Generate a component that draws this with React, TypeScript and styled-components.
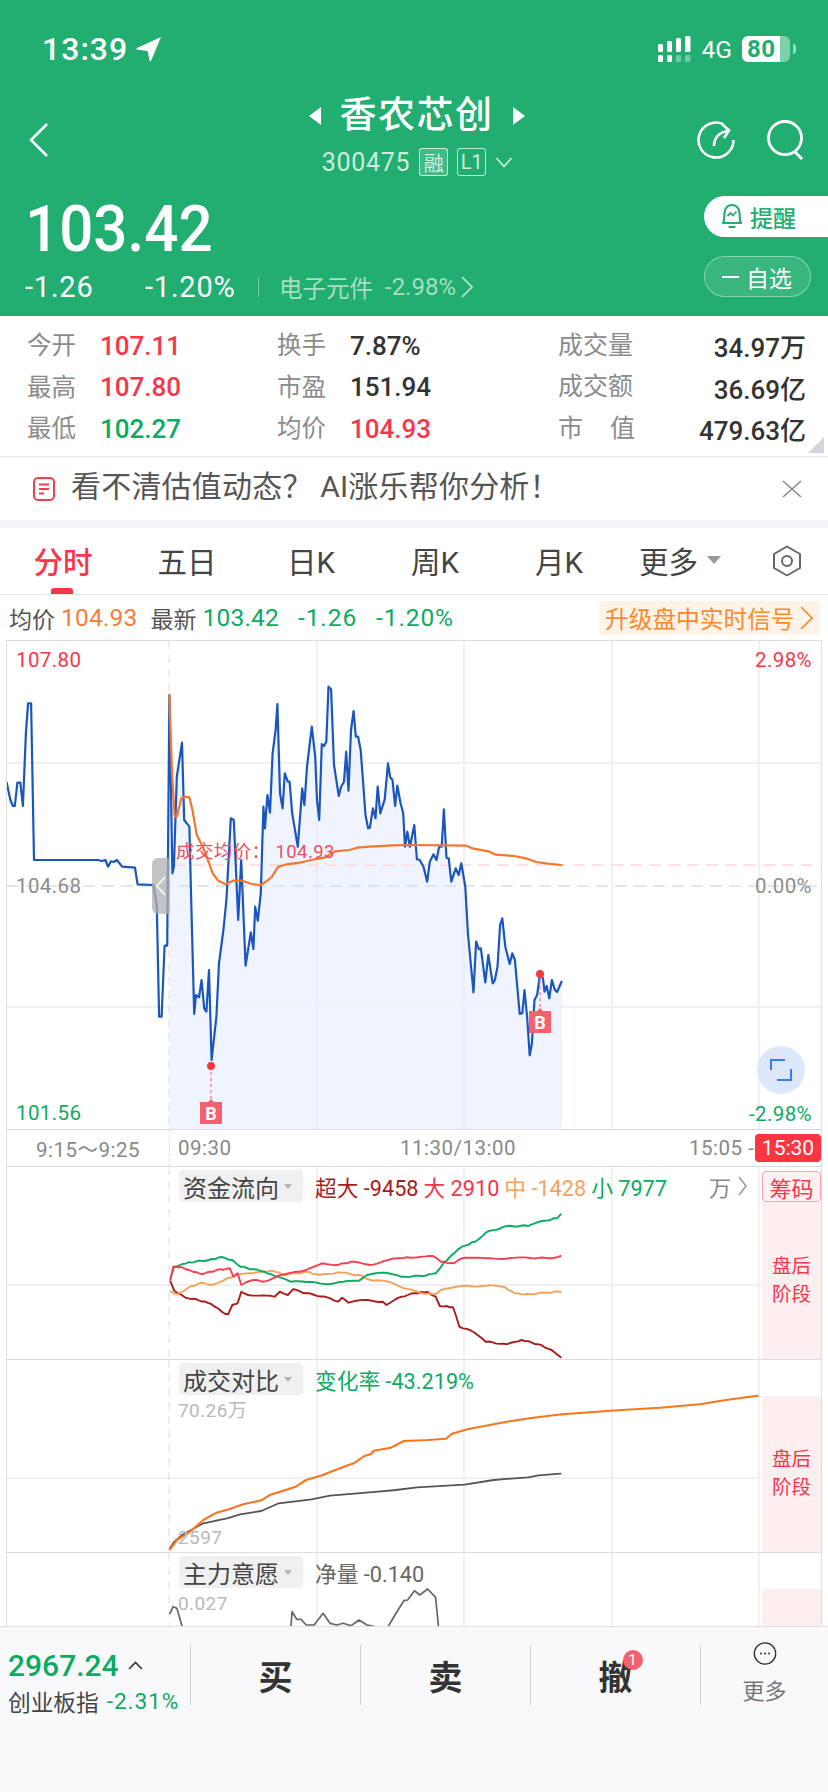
import React from 'react';
import styled, { createGlobalStyle } from 'styled-components';

const GREEN = '#22ae70';
const RED = '#f9354a';
const UP = '#0bab62';
const FONT = `Roboto, "Noto Sans CJK SC", sans-serif`;

const Global = createGlobalStyle`
  html, body { margin: 0; padding: 0; background: #fff; }
  body { width: 828px; height: 1792px; overflow: hidden; font-family: ${FONT}; }
  * { box-sizing: border-box; }
`;

type P = number[];
const toPts = (a: P[], sx: number, sy: number, ox: number, oy: number) =>
  a.map(([x, y]) => `${(x / sx - ox).toFixed(1)},${(y / sy - oy).toFixed(1)}`).join(' ');

/* adds the small tick-by-tick steps of a money-flow line to a traced outline */
const rough = (a: P[], amp: number): P[] => {
  const out: P[] = [];
  for (let i = 0; i < a.length - 1; i++) {
    const [x0, y0] = a[i];
    const [x1, y1] = a[i + 1];
    const n = Math.max(1, Math.round((x1 - x0) / 7));
    for (let k = 0; k < n; k++) {
      const t = k / n;
      const x = x0 + (x1 - x0) * t;
      out.push([x, y0 + (y1 - y0) * t + (k === 0 ? 0 : Math.sin(x * 1.7) * amp)]);
    }
  }
  out.push(a[a.length - 1]);
  return out;
};

const MX = 2.7034;
const blue: P[] = [[18,428],[28,480],[35,498],[40,498],[47,428],[55,428],[62,498],[70,280],[76,190],[84,190],[92,660],[265,660],[275,663],[285,660],[292,680],[300,664],[308,666],[316,660],[330,680],[365,683],[372,733],[415,735],[424,800],[430,1130],[437,1130],[445,917],[452,917],[458,165],[466,700],[470,680],[478,410],[492,308],[498,540],[512,560],[517,780],[525,1122],[530,1065],[538,1072],[545,1020],[552,1105],[558,1115],[565,990],[572,1260],[585,1130],[592,970],[604,870],[612,780],[624,535],[632,540],[644,840],[652,660],[664,977],[678,877],[685,927],[690,800],[697,842],[705,760],[712,500],[716,565],[723,465],[730,518],[737,340],[745,270],[750,192],[757,460],[764,505],[770,400],[778,425],[783,425],[790,520],[805,620],[817,445],[823,495],[830,380],[843,260],[852,350],[857,480],[863,540],[870,312],[876,318],[882,305],[888,140],[895,148],[903,375],[916,468],[922,440],[930,425],[936,335],[942,452],[949,270],[956,213],[962,290],[968,290],[975,330],[988,525],[995,565],[1000,563],[1008,505],[1015,535],[1021,440],[1028,520],[1040,478],[1049,370],[1055,412],[1061,420],[1068,498],[1074,437],[1083,490],[1090,520],[1095,620],[1101,575],[1108,620],[1120,555],[1127,658],[1135,660],[1145,680],[1155,725],[1162,665],[1172,643],[1180,660],[1187,620],[1194,620],[1200,508],[1207,654],[1213,655],[1220,725],[1232,685],[1240,705],[1247,670],[1258,740],[1265,880],[1280,1057],[1287,905],[1295,928],[1300,925],[1312,1027],[1320,945],[1332,1030],[1338,1020],[1345,980],[1352,855],[1358,835],[1366,920],[1378,972],[1385,940],[1392,960],[1405,1122],[1412,1120],[1418,1050],[1425,1130],[1432,1246],[1438,1210],[1445,1080],[1452,1065],[1460,1002],[1468,1015],[1472,1055],[1478,1038],[1485,1075],[1492,1020],[1500,1050],[1506,1056],[1518,1025]];
const blueFill: P[] = [[458,1467],...blue.slice(27),[1520,1025],[1520,1467]];
const avg: P[] = [[458,165],[465,400],[472,528],[478,530],[490,475],[500,470],[512,472],[520,510],[532,585],[550,625],[562,660],[575,700],[590,722],[610,733],[630,722],[655,722],[680,732],[705,735],[725,720],[735,710],[752,680],[775,673],[810,668],[850,658],[880,652],[905,634],[945,630],[965,623],[1000,620],[1060,616],[1120,615],[1200,616],[1260,617],[1280,626],[1320,634],[1340,644],[1390,648],[1425,656],[1450,666],[1480,671],[1518,675]];

const flowGreen: P[] = [[323,355],[330,320],[345,312],[370,305],[395,300],[420,291],[440,300],[455,320],[480,328],[500,335],[520,348],[550,365],[580,366],[615,372],[650,365],[680,362],[695,345],[730,338],[760,350],[800,348],[825,340],[840,310],[860,280],[875,260],[900,245],[920,218],[960,198],[1000,198],[1030,182],[1055,175],[1062,163]];
const flowRed: P[] = [[323,360],[328,320],[345,322],[365,335],[385,342],[410,330],[435,325],[442,350],[450,340],[457,375],[480,360],[500,365],[530,345],[560,335],[580,330],[610,310],[640,315],[665,305],[700,315],[735,300],[770,292],[820,288],[835,305],[860,310],[875,295],[920,295],[950,297],[1000,293],[1040,295],[1062,288]];
const flowOrange: P[] = [[323,395],[335,403],[355,385],[380,368],[400,375],[430,355],[450,345],[480,340],[515,332],[540,345],[580,335],[605,345],[640,337],[680,345],[705,362],[735,365],[765,385],[800,400],[825,403],[835,390],[850,385],[865,380],[920,377],[955,380],[975,400],[990,404],[1030,398],[1062,395]];
const flowDark: P[] = [[323,365],[330,392],[350,412],[375,420],[400,432],[420,455],[432,463],[440,435],[450,430],[457,395],[470,405],[520,410],[530,395],[545,405],[555,388],[580,400],[620,412],[640,425],[648,413],[660,428],[690,420],[725,425],[732,435],[760,410],[785,400],[810,396],[825,410],[833,438],[858,442],[870,500],[890,510],[920,545],[960,553],[988,540],[1020,553],[1045,570],[1062,592]];
const volOrange: P[] = [[322,568],[335,540],[360,515],[385,480],[410,458],[435,447],[460,433],[495,421],[512,404],[535,393],[560,380],[580,360],[610,346],[640,327],[670,310],[690,288],[702,283],[708,272],[740,263],[765,243],[810,240],[845,236],[855,222],[885,208],[960,185],[1010,173],[1065,163],[1170,151],[1250,143],[1325,133],[1375,120],[1435,107]];
const volGrey: P[] = [[322,565],[330,545],[345,525],[385,490],[430,475],[455,463],[495,453],[528,430],[590,418],[625,407],[700,397],[750,390],[790,382],[880,374],[935,360],[1000,352],[1020,346],[1062,341]];
const will1: P[] = [[322,160],[328,140],[335,145],[345,200],[350,225]];
const will2: P[] = [[550,225],[553,155],[562,178],[570,178],[580,195],[595,195],[612,160],[625,190],[638,195],[650,190],[665,197],[680,180],[695,195],[705,198],[720,205],[735,200],[750,160],[765,122],[772,120],[785,92],[795,105],[810,87],[825,112],[832,225]];

/* ---------- header ---------- */
const Page = styled.div`
  width: 828px; height: 1792px; position: relative; overflow: hidden; background: #fff; font-family: ${FONT};
`;
const Header = styled.header`
  height: 316px; background: ${GREEN}; color: #fff; display: flex; flex-direction: column;
`;
const StatusBar = styled.div`
  height: 98px; display: flex; align-items: center; padding: 0 32px 0 42px;
`;
const Clock = styled.span`
  font-size: 32px; font-weight: 500; letter-spacing: 1px; margin-right: 8px;
`;
const StatusRight = styled.div`
  margin-left: auto; display: flex; align-items: center;
`;
const Net = styled.span`
  font-size: 24.5px; margin: 0 10px 0 11px; font-weight: 400;
`;
const Battery = styled.div`
  width: 48px; height: 26px; border-radius: 6px; display: flex; align-items: center; overflow: hidden;
  background: linear-gradient(to right, #fff 0 38px, rgba(255,255,255,.42) 38px);
  color: ${GREEN}; font-size: 24px; font-weight: 700; padding-left: 5px; letter-spacing: .5px;
`;
const BatteryCap = styled.div`
  width: 3px; height: 10px; margin-left: 3px; border-radius: 0 3px 3px 0; background: rgba(255,255,255,.5);
`;
const NavRow = styled.div`
  height: 88px; display: grid; grid-template-columns: 1fr auto 1fr; padding: 0 24px 0 29px;
`;
const NavSide = styled.div<{ $end?: boolean }>`
  display: flex; align-items: center; gap: 30px; justify-content: ${p => (p.$end ? 'flex-end' : 'flex-start')}; padding-bottom: 5px;
`;
const NavCenter = styled.div`
  display: flex; flex-direction: column; align-items: center; gap: 14px;
`;
const TitleRow = styled.div`
  display: flex; align-items: center; gap: 19px; height: 36px;
`;
const Title = styled.h1`
  margin: 0; font-size: 37px; line-height: 36px; font-weight: 500; letter-spacing: 1.5px;
`;
const Tri = styled.i<{ $dir: 'l' | 'r' }>`
  width: 0; height: 0; border-top: 9px solid transparent; border-bottom: 9px solid transparent;
  ${p => (p.$dir === 'l' ? 'border-right: 12px solid #fff;' : 'border-left: 12px solid #fff;')}
`;
const CodeRow = styled.div`
  display: flex; align-items: center; height: 28px; color: rgba(255,255,255,.78); margin-left: 2px;
`;
const Code = styled.span`
  font-size: 25px; letter-spacing: .7px; margin-right: 9px;
`;
const Tag = styled.span<{ $fill?: boolean }>`
  width: 29px; height: 28px; border: 1px solid rgba(255,255,255,.75); border-radius: 3px; font-size: 20px;
  display: flex; align-items: center; justify-content: center; margin-right: 9px;
  background: ${p => (p.$fill ? 'rgba(255,255,255,.15)' : 'transparent')};
`;
const PriceRow = styled.div`
  flex: 1; display: flex; justify-content: space-between; padding-left: 25px;
`;
const PriceCol = styled.div`
  padding-top: 11px; display: flex; flex-direction: column; gap: 11px;
`;
const BigPrice = styled.div`
  font-size: 65px; line-height: 64px; font-weight: 500; transform: scaleX(.925); transform-origin: left center;
`;
const SubRow = styled.div`
  display: flex; align-items: center; height: 30px;
`;
const Change = styled.span<{ $w: number }>`
  width: ${p => p.$w}px; font-size: 29px; letter-spacing: .8px;
`;
const SubDivider = styled.i`
  width: 1px; height: 20px; background: rgba(255,255,255,.4); margin: 0 20px 0 21px;
`;
const Sector = styled.span`
  font-size: 24px; color: rgba(255,255,255,.6); display: flex; align-items: center; gap: 5px;
`;
const SectorName = styled.span`
  font-size: 23.5px; margin-right: 7px;
`;
const PillCol = styled.div`
  padding-top: 10px; width: 124px; display: flex; flex-direction: column; gap: 19px;
`;
const RemindPill = styled.div`
  height: 41px; background: #fff; border-radius: 21px 0 0 21px; color: ${GREEN}; font-size: 23px; font-weight: 500;
  display: flex; align-items: center; padding-left: 16px; gap: 6px;
`;
const WatchPill = styled.div`
  height: 41px; width: 107px; background: rgba(255,255,255,.1); border: 1px solid rgba(255,255,255,.4); border-radius: 21px;
  display: flex; align-items: center; padding-left: 17px; font-size: 23px; gap: 7px;
`;
const Dash = styled.i`
  width: 17px; height: 2px; background: #fff;
`;

/* ---------- stats ---------- */
const Stats = styled.section`
  height: 141px; position: relative; padding: 8px 22px 0 27px; border-bottom: 1px solid #e8e8e8;
  display: grid; grid-template-columns: 250px 281px 1fr; grid-auto-rows: 41.5px; align-items: center;
`;
const Stat = styled.div`
  display: flex; align-items: center;
`;
const StatLabel = styled.span`
  width: 73px; font-size: 24.5px; color: #8b8b8b; position: relative; top: -1px;
`;
const StatValue = styled.span<{ $c?: string }>`
  font-size: 26px; color: ${p => p.$c || '#333'}; font-weight: 500; position: relative; top: 1px;
`;
const StatWide = styled(Stat)`
  justify-content: space-between;
`;
const SpacedLabel = styled.span`
  width: 77px; font-size: 25px; color: #8b8b8b; display: flex; justify-content: space-between; position: relative; top: -2px;
`;
const Corner = styled.i`
  position: absolute; right: 4px; bottom: 3px; width: 0; height: 0;
  border-left: 16px solid transparent; border-bottom: 16px solid #d2d5da;
`;

const Banner = styled.div`
  height: 63px; display: flex; align-items: center; padding: 0 26px 0 33px; gap: 16px;
`;
const BannerText = styled.span`
  font-size: 30px; line-height: 36px; color: #555; flex: 1; white-space: pre; margin-top: -4px; letter-spacing: .2px;
`;
const Band = styled.div`
  height: 8px; background: #f2f4f8;
`;

/* ---------- tabs ---------- */
const Tabs = styled.nav`
  height: 67px; display: grid; grid-template-columns: repeat(6, 124px) 83px; padding-left: 1px; border-bottom: 1px solid #e4e4e4;
  align-items: center;
`;
const Tab = styled.div<{ $on?: boolean; $shift?: number }>`
  height: 100%; position: relative; display: flex; align-items: center; justify-content: center; gap: 9px;
  font-size: 29.5px; color: ${p => (p.$on ? RED : '#444')}; font-weight: ${p => (p.$on ? 500 : 400)};
  padding-right: ${p => p.$shift ?? 0}px; padding-bottom: 2px;
  ${p => p.$on && `&::after { content: ''; position: absolute; left: 50px; bottom: 0; width: 22px; height: 6px; border-radius: 3px 3px 0 0; background: ${RED}; }`}
`;
const Caret = styled.i<{ $s?: number; $c?: string }>`
  width: 0; height: 0; border-left: ${p => p.$s ?? 7}px solid transparent; border-right: ${p => p.$s ?? 7}px solid transparent;
  border-top: ${p => (p.$s ?? 7) * 1.15}px solid ${p => p.$c || '#999'};
`;
const IconCell = styled.div`
  display: flex; align-items: center; justify-content: center;
`;

/* ---------- info row ---------- */
const InfoRow = styled.div`
  height: 45px; display: flex; align-items: center; padding: 0 8px 0 9px; font-size: 23px;
`;
const InfoLabel = styled.span`
  color: #555; margin-right: 6px;
`;
const InfoNum = styled.span<{ $c: string; $mr: number }>`
  color: ${p => p.$c}; margin-right: ${p => p.$mr}px; font-size: 24.5px; letter-spacing: .2px;
`;
const InfoDelta = styled(InfoNum)`
  letter-spacing: .9px;
`;
const Signal = styled.div`
  margin-left: auto; width: 221px; height: 34px; background: #fef3e9; border-radius: 4px; color: #fb8a2e; font-size: 23.7px;
  display: flex; align-items: center; padding-left: 6px; gap: 5px;
`;

/* ---------- charts ---------- */
const Charts = styled.section`
  margin: 0 6px; height: 986px; border: 1px solid #ddd; border-bottom: 0; overflow: hidden;
`;
const Canvas = styled.div`
  position: relative;
`;
const Drawing = styled.svg`
  display: block;
`;
const Label = styled.span<{ $x?: number; $r?: number; $y: number; $c: string; $s?: number }>`
  position: absolute; top: ${p => p.$y}px; transform: translateY(-50%); white-space: nowrap;
  ${p => (p.$r !== undefined ? `right: ${p.$r}px;` : `left: ${p.$x}px;`)}
  color: ${p => p.$c}; font-size: ${p => p.$s ?? 20.5}px; letter-spacing: .4px;
`;
const Handle = styled.div`
  position: absolute; left: 145px; top: 217px; width: 18px; height: 56px; background: rgba(176,176,176,.75);
  border-radius: 6px 0 0 6px; display: flex; align-items: center; justify-content: center;
`;
const Expand = styled.div`
  position: absolute; left: 750px; top: 405px; width: 48px; height: 48px; border-radius: 50%; background: #dce7fb;
  display: flex; align-items: center; justify-content: center;
`;
const TimeAxis = styled.div`
  position: relative; height: 37px; border-top: 1px solid #ddd;
`;
const AxisDash = styled.i`
  position: absolute; left: 162px; top: 0; bottom: 0; border-left: 1px dashed #ddd;
`;
const TimeText = styled.span<{ $x: number }>`
  position: absolute; left: ${p => p.$x}px; top: 50%; transform: translateY(-50%); font-size: 20.5px; color: #888; letter-spacing: .5px; white-space: nowrap;
`;
const EndTime = styled.span`
  position: absolute; left: 748px; right: 0; top: 4px; height: 28px; border-radius: 4px; background: #fb3640; color: #fff;
  font-size: 21px; display: flex; align-items: center; justify-content: center;
`;
const PanelBox = styled(Canvas)`
  border-top: 1px solid #ddd;
`;
const Selector = styled.div`
  position: absolute; left: 172px; top: 3px; width: 124px; height: 32px; background: #f0f0f0; border-radius: 4px;
  display: flex; align-items: center; padding-left: 4px; gap: 5px; font-size: 24px; color: #444;
`;
const Legend = styled.div`
  position: absolute; left: 308px; top: 3px; height: 32px; display: flex; align-items: center; gap: 5px; font-size: 21.7px; white-space: nowrap;
`;
const LegendItem = styled.span<{ $c: string }>`
  color: ${p => p.$c};
`;
const Unit = styled.span`
  position: absolute; left: 702px; top: 3px; height: 32px; display: flex; align-items: center; gap: 7px; font-size: 22px; color: #888;
`;
const ChipBtn = styled.span`
  position: absolute; left: 755px; top: 4px; width: 59px; height: 31px; border: 1px solid #f6a5ab; border-radius: 4px; background: #fff1f1;
  color: ${RED}; font-size: 22px; display: flex; align-items: center; justify-content: center;
`;
const Phase = styled.div<{ $top: number }>`
  position: absolute; left: 755px; right: 0; top: ${p => p.$top}px; bottom: 0; background: #fdefef; color: ${RED};
  font-size: 19.5px; line-height: 28px; display: flex; align-items: center; justify-content: center; text-align: center;
`;

/* ---------- bottom bar ---------- */
const Bottom = styled.footer`
  position: absolute; left: 0; right: 0; bottom: 0; height: 166px; background: #f9f9fb; border-top: 1px solid #e0e0e4;
  display: grid; grid-template-columns: 190px 170px 170px 170px 128px; align-items: start; padding-top: 18px;
`;
const IndexCell = styled.div`
  padding-left: 8px;
`;
const IndexTop = styled.div`
  height: 40px; display: flex; align-items: center; gap: 9px; color: ${UP}; font-size: 30px; font-weight: 500;
`;
const IndexBottom = styled.div`
  display: flex; align-items: center; gap: 8px; font-size: 22.7px; color: #444;
`;
const IndexPct = styled.span`
  color: ${UP}; letter-spacing: .9px;
`;
const ActionCell = styled.div`
  height: 60px; position: relative; border-left: 1px solid #cfcfd2; display: flex; align-items: center; justify-content: center;
  font-size: 34px; font-weight: 700; color: #333;
`;
const ActionText = styled.span`
  position: relative;
`;
const Badge = styled.i`
  position: absolute; left: 24px; top: -1px; width: 20px; height: 20px; border-radius: 50%; background: #f6606e; color: #fff;
  font-size: 15px; font-style: normal; font-weight: 400; display: flex; align-items: center; justify-content: center;
`;
const MoreCell = styled.div`
  position: relative; height: 60px; border-left: 1px solid #cfcfd2; color: #777; font-size: 22px; font-weight: 400;
  display: flex; flex-direction: column; align-items: center; gap: 8px;
`;
const MoreIcon = styled.svg`
  margin-top: -3px; display: block;
`;

const Line = ({ pts, c, w = 2.2 }: { pts: string; c: string; w?: number }) => (
  <polyline points={pts} fill="none" stroke={c} strokeWidth={w} strokeLinejoin="round" strokeLinecap="round" />
);
const Grid = ({ h, ys, dash = true }: { h: number; ys: number[]; dash?: boolean }) => (
  <g>
    {[310, 457, 605, 752].map(x => <line key={x} x1={x} x2={x} y1={0} y2={h} stroke="#e9e9ec" strokeWidth={1.3} />)}
    {ys.map(y => <line key={y} x1={0} x2={814} y1={y} y2={y} stroke="#eff0f2" strokeWidth={2} />)}
    {dash && <line x1={162} x2={162} y1={0} y2={h} stroke="#ddd" strokeWidth={1} strokeDasharray="8 6" />}
  </g>
);
const Marker = ({ x, dotY, boxY }: { x: number; dotY: number; boxY: number }) => (
  <g>
    <line x1={x} x2={x} y1={dotY} y2={boxY} stroke="#f8808c" strokeWidth={1.4} strokeDasharray="3 3" />
    <circle cx={x} cy={dotY} r={4} fill="#fb3640" />
    <polygon points={`${x - 11},${boxY + 2} ${x - 3},${boxY + 2} ${x},${boxY - 1} ${x + 3},${boxY + 2} ${x + 11},${boxY + 2} ${x + 11},${boxY + 24} ${x - 11},${boxY + 24}`} fill="#f8606f" />
    <text x={x} y={boxY + 20} textAnchor="middle" fontFamily="Roboto" fontWeight="700" fontSize="18" fill="#fff">B</text>
  </g>
);
const Chevron = ({ w, h, c, sw = 1.6 }: { w: number; h: number; c: string; sw?: number }) => (
  <svg width={w} height={h} viewBox={`0 0 ${w} ${h}`}><path d={`M1 1 L${w - 1} ${h / 2} L1 ${h - 1}`} fill="none" stroke={c} strokeWidth={sw} /></svg>
);

export default function App() {
  const mp = (a: P[]) => toPts(a, MX, 3, 7, 1);
  const p1 = (a: P[]) => toPts(rough(a, 2), 1.894, 3, 7, 7);
  const p2 = (a: P[]) => toPts(a, 1.894, 3, 7, 0);
  const p3 = (a: P[]) => toPts(a, 1.894, 3, 7, -7);
  const phase = <span>盘后<br />阶段</span>;
  return (
    <Page>
      <Global />
      <Header>
        <StatusBar>
          <Clock>13:39</Clock>
          <svg width="25" height="25" viewBox="0 0 25 25"><path d="M25 0 L15 24 Q14 25 13.5 23.5 L11.5 14 L0.8 12.5 Q0 11.5 1 11 Z" fill="#fff" /></svg>
          <StatusRight>
            <svg width="33" height="27" viewBox="0 0 33 27">
              <rect x="0" y="8" width="5" height="8" rx="1.5" fill="#fff" />
              <rect x="9" y="5" width="5" height="11" rx="1.5" fill="#fff" />
              <rect x="18" y="2" width="5" height="14" rx="1.5" fill="#fff" />
              <rect x="27" y="0" width="5.5" height="16" rx="1.5" fill="#fff" />
              <rect x="0" y="19" width="5" height="7" rx="1.5" fill="#fff" />
              <rect x="9" y="19" width="5" height="7" rx="1.5" fill="#fff" />
              <rect x="18" y="19" width="5" height="7" rx="1.5" fill="rgba(255,255,255,.35)" />
              <rect x="27" y="19" width="5.5" height="7" rx="1.5" fill="rgba(255,255,255,.35)" />
            </svg>
            <Net>4G</Net>
            <Battery>80</Battery>
            <BatteryCap />
          </StatusRight>
        </StatusBar>
        <NavRow>
          <NavSide>
            <svg width="20" height="34" viewBox="0 0 20 34"><path d="M18 1 L2 17 L18 33" fill="none" stroke="#fff" strokeWidth="2.6" /></svg>
          </NavSide>
          <NavCenter>
            <TitleRow><Tri $dir="l" /><Title>香农芯创</Title><Tri $dir="r" /></TitleRow>
            <CodeRow>
              <Code>300475</Code>
              <Tag $fill>融</Tag>
              <Tag>L1</Tag>
              <svg width="18" height="11" viewBox="0 0 18 11"><path d="M1.5 1 L9 9.5 L16.5 1" fill="none" stroke="rgba(255,255,255,.8)" strokeWidth="1.6" /></svg>
            </CodeRow>
          </NavCenter>
          <NavSide $end>
            <svg width="40" height="40" viewBox="0 0 40 40" fill="none" stroke="#fff" strokeWidth="2.6">
              <path d="M27 4 A17.5 17.5 0 1 0 37.5 20" />
              <path d="M18 26 C18 18 23 12 32 11" />
              <path d="M26 4 L33 10.5 L28 18" />
            </svg>
            <svg width="38" height="40" viewBox="0 0 38 40" fill="none" stroke="#fff" strokeWidth="2.8">
              <circle cx="19" cy="18" r="16.5" /><path d="M28 31 L36 39" />
            </svg>
          </NavSide>
        </NavRow>
        <PriceRow>
          <PriceCol>
            <BigPrice>103.42</BigPrice>
            <SubRow>
              <Change $w={120}>-1.26</Change>
              <Change $w={92}>-1.20%</Change>
              <SubDivider />
              <Sector>
                <SectorName>电子元件</SectorName>
                <span>-2.98%</span>
                <Chevron w={12} h={22} c="rgba(255,255,255,.7)" />
              </Sector>
            </SubRow>
          </PriceCol>
          <PillCol>
            <RemindPill>
              <svg width="24" height="28" viewBox="0 0 24 28" fill="none" stroke={GREEN} strokeWidth="2.2">
                <path d="M3 20 C5 17 4 13 4.5 10 C5 5 8 2 12 2 C16 2 19 5 19.5 10 C20 13 19 17 21 20 Z" strokeLinejoin="round" />
                <path d="M8.5 24 H15.5" />
                <path d="M7.5 13 L10.5 10 L13 12.5 L16.5 8.5" strokeWidth="1.8" />
              </svg>
              提醒
            </RemindPill>
            <WatchPill><Dash />自选</WatchPill>
          </PillCol>
        </PriceRow>
      </Header>

      <Stats>
        <Stat><StatLabel>今开</StatLabel><StatValue $c={RED}>107.11</StatValue></Stat>
        <Stat><StatLabel>换手</StatLabel><StatValue>7.87%</StatValue></Stat>
        <StatWide><SpacedLabel>成交量</SpacedLabel><StatValue>34.97万</StatValue></StatWide>
        <Stat><StatLabel>最高</StatLabel><StatValue $c={RED}>107.80</StatValue></Stat>
        <Stat><StatLabel>市盈</StatLabel><StatValue>151.94</StatValue></Stat>
        <StatWide><SpacedLabel>成交额</SpacedLabel><StatValue>36.69亿</StatValue></StatWide>
        <Stat><StatLabel>最低</StatLabel><StatValue $c={UP}>102.27</StatValue></Stat>
        <Stat><StatLabel>均价</StatLabel><StatValue $c={RED}>104.93</StatValue></Stat>
        <StatWide><SpacedLabel><span>市</span><span>值</span></SpacedLabel><StatValue>479.63亿</StatValue></StatWide>
        <Corner />
      </Stats>

      <Banner>
        <svg width="22" height="24" viewBox="0 0 22 24" fill="none" stroke="#f0404f" strokeWidth="2">
          <rect x="1" y="1" width="20" height="22" rx="4" />
          <path d="M6 7.5 H16 M6 12 H16 M6 16.5 H11" />
        </svg>
        <BannerText>看不清估值动态？ AI涨乐帮你分析！</BannerText>
        <svg width="20" height="18" viewBox="0 0 20 18"><path d="M1 1 L19 17 M19 1 L1 17" stroke="#888" strokeWidth="1.6" /></svg>
      </Banner>
      <Band />

      <Tabs>
        <Tab $on>分时</Tab>
        <Tab>五日</Tab>
        <Tab>日K</Tab>
        <Tab>周K</Tab>
        <Tab>月K</Tab>
        <Tab $shift={6}>更多<Caret /></Tab>
        <IconCell>
          <svg width="30" height="32" viewBox="0 0 30 32" fill="none" stroke="#666" strokeWidth="2">
            <path d="M15 1.5 L28 9 V23 L15 30.5 L2 23 V9 Z" strokeLinejoin="round" />
            <circle cx="15" cy="16" r="5" />
          </svg>
        </IconCell>
      </Tabs>

      <InfoRow>
        <InfoLabel>均价</InfoLabel><InfoNum $c="#f07f3c" $mr={13}>104.93</InfoNum>
        <InfoLabel>最新</InfoLabel><InfoNum $c={UP} $mr={19}>103.42</InfoNum>
        <InfoDelta $c={UP} $mr={19}>-1.26</InfoDelta>
        <InfoDelta $c={UP} $mr={0}>-1.20%</InfoDelta>
        <Signal>升级盘中实时信号<Chevron w={13} h={24} c="#fb8a2e" /></Signal>
      </InfoRow>

      <Charts>
        <Canvas>
          <Drawing width={814} height={488} viewBox="0 0 814 488">
            <polygon points={mp(blueFill)} fill="#eff4fe" />
            <Grid h={488} ys={[122, 366]} />
            <line x1={167} x2={814} y1={224} y2={224} stroke="#fadadd" strokeWidth={1.4} strokeDasharray="12 7" />
            <line x1={0} x2={814} y1={245} y2={245} stroke="#d6dfe8" strokeWidth={1.4} strokeDasharray="12 7" />
            <Line pts={mp(blue)} c="#1a56bd" />
            <Line pts={mp(avg)} c="#f8762c" />
            <Marker x={204} dotY={425} boxY={459} />
            <Marker x={533} dotY={333} boxY={368} />
          </Drawing>
          <Label $x={9} $y={19} $c={RED}>107.80</Label>
          <Label $r={9} $y={19} $c={RED}>2.98%</Label>
          <Label $x={169} $y={209} $c="#e8505f" $s={18.5}>成交均价： 104.93</Label>
          <Label $x={9} $y={245} $c="#8c8c8c">104.68</Label>
          <Label $r={9} $y={245} $c="#8c8c8c">0.00%</Label>
          <Label $x={9} $y={472} $c={UP}>101.56</Label>
          <Label $r={9} $y={473} $c={UP}>-2.98%</Label>
          <Handle><svg width="10" height="20" viewBox="0 0 10 20"><path d="M9 1 L1 10 L9 19" fill="none" stroke="#fff" strokeWidth="1.5" /></svg></Handle>
          <Expand>
            <svg width="22" height="22" viewBox="0 0 22 22" fill="none" stroke="#3a7bf0" strokeWidth="2">
              <path d="M1 11 V1 H15 M7 21 H21 V10" />
            </svg>
          </Expand>
        </Canvas>

        <TimeAxis>
          <AxisDash />
          <TimeText $x={29}>9:15～9:25</TimeText>
          <TimeText $x={171}>09:30</TimeText>
          <TimeText $x={393}>11:30/13:00</TimeText>
          <TimeText $x={682}>15:05 -</TimeText>
          <EndTime>15:30</EndTime>
        </TimeAxis>

        <PanelBox>
          <Drawing width={814} height={192} viewBox="0 0 814 192">
            <Grid h={192} ys={[118]} />
            <Line pts={p1(flowDark)} c="#a81c1c" w={1.9} />
            <Line pts={p1(flowOrange)} c="#f4a25e" w={1.9} />
            <Line pts={p1(flowGreen)} c={UP} w={1.9} />
            <Line pts={p1(flowRed)} c="#f5404f" w={1.9} />
          </Drawing>
          <Selector>资金流向<Caret $s={4.5} $c="#b5b5b5" /></Selector>
          <Legend>
            <LegendItem $c="#a81c1c">超大 -9458</LegendItem>
            <LegendItem $c="#f5344a">大 2910</LegendItem>
            <LegendItem $c="#f4a25e">中 -1428</LegendItem>
            <LegendItem $c={UP}>小 7977</LegendItem>
          </Legend>
          <Unit>万<Chevron w={9} h={20} c="#999" /></Unit>
          <ChipBtn>筹码</ChipBtn>
          <Phase $top={35}>{phase}</Phase>
        </PanelBox>

        <PanelBox>
          <Drawing width={814} height={192} viewBox="0 0 814 192">
            <Grid h={192} ys={[118]} />
            <Line pts={p2(volGrey)} c="#555" w={1.8} />
            <Line pts={p2(volOrange)} c="#f8761f" w={2.1} />
          </Drawing>
          <Selector>成交对比<Caret $s={4.5} $c="#b5b5b5" /></Selector>
          <Legend><LegendItem $c={UP}>变化率 -43.219%</LegendItem></Legend>
          <Label $x={171} $y={48} $c="#b9b9b9" $s={19}>70.26万</Label>
          <Label $x={171} $y={177} $c="#b9b9b9" $s={19}>2597</Label>
          <Phase $top={36}>{phase}</Phase>
        </PanelBox>

        <PanelBox>
          <Drawing width={814} height={73} viewBox="0 0 814 73">
            <Grid h={73} ys={[]} />
            <Line pts={p3(will1)} c="#666" w={1.7} />
            <Line pts={p3(will2)} c="#666" w={1.7} />
          </Drawing>
          <Selector>主力意愿<Caret $s={4.5} $c="#b5b5b5" /></Selector>
          <Legend><LegendItem $c="#666">净量 -0.140</LegendItem></Legend>
          <Label $x={171} $y={50} $c="#b9b9b9" $s={19}>0.027</Label>
          <Phase $top={36} />
        </PanelBox>
      </Charts>

      <Bottom>
        <IndexCell>
          <IndexTop>
            2967.24
            <svg width="15" height="9" viewBox="0 0 15 9"><path d="M1 8 L7.5 1.5 L14 8" fill="none" stroke="#333" strokeWidth="1.6" /></svg>
          </IndexTop>
          <IndexBottom>创业板指<IndexPct>-2.31%</IndexPct></IndexBottom>
        </IndexCell>
        <ActionCell><ActionText>买</ActionText></ActionCell>
        <ActionCell><ActionText>卖</ActionText></ActionCell>
        <ActionCell><ActionText>撤<Badge>1</Badge></ActionText></ActionCell>
        <MoreCell>
          <MoreIcon width="34" height="34" viewBox="0 0 34 34" fill="none">
            <circle cx="17" cy="17" r="15.8" stroke="#333" strokeWidth="2" />
            <circle cx="11" cy="17" r="1.5" fill="#333" /><circle cx="17" cy="17" r="1.5" fill="#333" /><circle cx="23" cy="17" r="1.5" fill="#333" />
          </MoreIcon>
          更多
        </MoreCell>
      </Bottom>
    </Page>
  );
}
